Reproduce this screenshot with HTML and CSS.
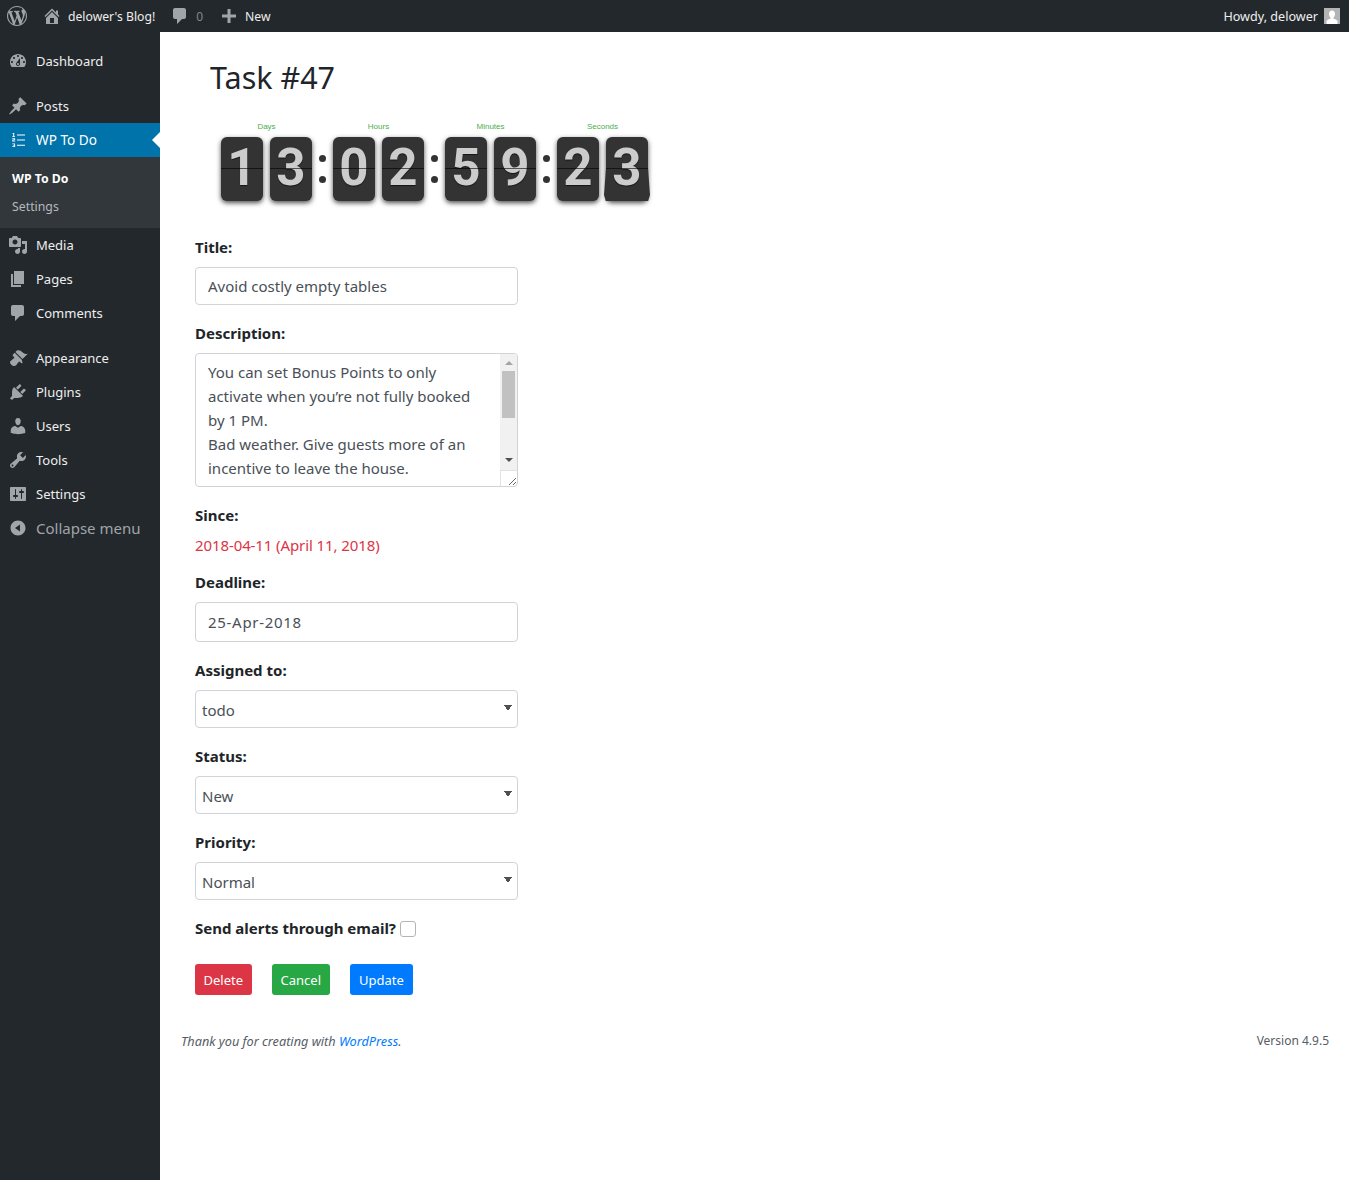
FILE: index.html
```html
<!DOCTYPE html>
<html lang="en">
<head>
  <meta charset="UTF-8" />
  <meta name="viewport" content="width=device-width, initial-scale=1.0" />
  <title>Task #47 - WP To Do</title>
  <link rel="stylesheet" href="styles.css">
</head>
<body>
  <!-- Admin bar -->
  <header class="adminbar">
    <svg class="bar-logo" viewBox="0 0 20 20"><path d="M20 10c0-5.51-4.49-10-10-10C4.48 0 0 4.49 0 10c0 5.52 4.48 10 10 10 5.51 0 10-4.48 10-10zM7.78 15.37L4.37 6.22c.55-.02 1.17-.08 1.17-.08.5-.06.44-1.13-.06-1.11 0 0-1.45.11-2.37.11-.18 0-.37 0-.58-.01C4.12 2.69 6.87 1.11 10 1.11c2.33 0 4.45.87 6.05 2.34-.68-.11-1.65.39-1.65 1.58 0 .74.45 1.36.9 2.1.35.61.55 1.36.55 2.46 0 1.49-1.4 5-1.4 5l-3.03-8.37c.54-.02.82-.17.82-.17.5-.05.44-1.25-.06-1.22 0 0-1.44.12-2.38.12-.87 0-2.33-.12-2.33-.12-.5-.03-.56 1.2-.06 1.22l.92.08 1.26 3.41zM17.41 10c.24-.64.74-1.87.43-4.25.7 1.29 1.05 2.71 1.05 4.25 0 3.29-1.73 6.24-4.4 7.78.97-2.59 1.94-5.2 2.92-7.78zM6.1 18.09C3.12 16.65 1.11 13.53 1.11 10c0-1.3.23-2.48.72-3.59C3.25 10.3 4.67 14.2 6.1 18.09zm4.03-6.63l2.58 6.98c-.86.29-1.76.45-2.71.45-.79 0-1.57-.11-2.29-.33.81-2.38 1.62-4.74 2.42-7.1z"/></svg>
    <div class="bar-item bar-home">
      <svg class="bar-icon" viewBox="0 0 20 20"><path d="M16 8.5l1.53 1.53-1.06 1.06L10 4.62l-6.47 6.47-1.06-1.06L10 2.5l4 4v-2h2v4zm-6-2.46l6 5.99V18H4v-5.97zM12 17v-5H8v5h4z"/></svg>
      <span class="bar-text">delower's Blog!</span>
    </div>
    <div class="bar-item bar-comments">
      <svg class="bar-icon" viewBox="0 0 20 20"><path d="M5 2h9c1.1 0 2 .9 2 2v7c0 1.1-.9 2-2 2h-2l-5 5v-5H5c-1.1 0-2-.9-2-2V4c0-1.1.9-2 2-2z"/></svg>
      <span class="bar-text bar-count">0</span>
    </div>
    <div class="bar-item bar-new">
      <svg class="bar-icon" viewBox="0 0 20 20"><path d="M17 8.5v3h-5.5V17h-3v-5.500H3v-3h5.500V3h3v5.500z"/></svg>
      <span class="bar-text">New</span>
    </div>
    <div class="bar-howdy">
      <span class="bar-text">Howdy, delower</span>
      <svg class="bar-avatar" viewBox="0 0 16 16"><rect width="16" height="16" fill="#b4b4b4"/><path fill="#fff" d="M8 2.500c1.900 0 3 1.500 3 3.400 0 1.500-.7 3-1.600 3.700v.9c1.500.5 3.600 1.300 4.100 2.500V16h-11v-3c.5-1.200 2.600-2 4.100-2.500v-.9C5.700 8.900 5 7.400 5 5.900c0-1.900 1.100-3.400 3-3.400z"/></svg>
    </div>
  </header>

  <div class="layout">
    <!-- Sidebar menu -->
    <nav class="sidebar">
      <a class="menu-item first">
        <svg class="menu-icon" viewBox="0 0 20 20"><path fill-rule="evenodd" d="M3.760 16h12.480c1.100-1.370 1.760-3.110 1.760-5 0-4.420-3.580-8-8-8s-8 3.580-8 8c0 1.890.66 3.630 1.760 5zM10 4c.55 0 1 .45 1 1s-.45 1-1 1-1-.45-1-1 .45-1 1-1zM6 6c.55 0 1 .45 1 1s-.45 1-1 1-1-.45-1-1 .45-1 1-1zm8 0c.55 0 1 .45 1 1s-.45 1-1 1-1-.45-1-1 .45-1 1-1zm-5.370 5.550L12 7v6c0 1.100-.9 2-2 2s-2-.9-2-2c0-.57.24-1.080.63-1.450zM4 10c.55 0 1 .45 1 1s-.45 1-1 1-1-.45-1-1 .45-1 1-1zm12 0c.55 0 1 .45 1 1s-.45 1-1 1-1-.45-1-1 .45-1 1-1zm-5 3c0-.55-.45-1-1-1s-1 .45-1 1 .45 1 1 1 1-.45 1-1z"/></svg>
        Dashboard
      </a>
      <a class="menu-item gap">
        <svg class="menu-icon" viewBox="0 0 20 20"><path d="M10.440 3.020l1.820-1.820 6.360 6.350-1.830 1.820c-1.050-.68-2.480-.57-3.410.36l-.75.75c-.92.93-1.040 2.350-.35 3.410l-1.830 1.820-2.410-2.410-2.800 2.790c-.42.42-3.380 2.710-3.800 2.290s1.860-3.390 2.280-3.810l2.790-2.790L4.100 9.360l1.830-1.820c1.050.69 2.480.57 3.400-.36l.75-.75c.93-.92 1.050-2.350.36-3.410z"/></svg>
        Posts
      </a>
      <a class="menu-item current">
        <svg class="menu-icon" viewBox="0 0 20 20"><path d="M9 4.600h8v1H9zM9 9.600h8v1H9zM9 14.800h8v1H9z"/><path d="M4.800 3h1.400v3.200H7v.8H4.300v-.8h.9V4H4.500zM4.300 8.200h2.800v2H5.300v.6h1.900v.8H4.300V9.600h1.900v-.6H4.300zM4.300 13.400h2.800v3.600H4.300v-.8h1.900v-.6H5v-.7h1.200v-.7H4.300z"/></svg>
        WP To Do
      </a>
      <div class="submenu">
        <a class="sub-item active">WP To Do</a>
        <a class="sub-item">Settings</a>
      </div>
      <a class="menu-item">
        <svg class="menu-icon" viewBox="0 0 20 20"><path d="M13 11V4c0-.55-.45-1-1-1h-1.670L9 1H5L3.670 3H2c-.55 0-1 .45-1 1v7c0 .55.45 1 1 1h10c.55 0 1-.45 1-1zM7 4.500c1.380 0 2.500 1.120 2.500 2.500S8.380 9.500 7 9.500 4.500 8.380 4.500 7 5.620 4.500 7 4.500zM14 6h5v10.500c0 1.380-1.120 2.500-2.500 2.500S14 17.880 14 16.500s1.120-2.500 2.500-2.500c.17 0 .34.02.5.05V9h-3V6zm-4 8.050V13h2v3.500c0 1.380-1.120 2.500-2.500 2.500S7 17.880 7 16.500 8.120 14 9.500 14c.17 0 .34.02.5.05z"/></svg>
        Media
      </a>
      <a class="menu-item">
        <svg class="menu-icon" viewBox="0 0 20 20"><path d="M6 15V2h10v13H6zm-1 1h8v2H3V5h2v11z"/></svg>
        Pages
      </a>
      <a class="menu-item">
        <svg class="menu-icon" viewBox="0 0 20 20"><path d="M5 2h9c1.100 0 2 .9 2 2v7c0 1.100-.9 2-2 2h-2l-5 5v-5H5c-1.100 0-2-.9-2-2V4c0-1.100.9-2 2-2z"/></svg>
        Comments
      </a>
      <a class="menu-item gap">
        <svg class="menu-icon" viewBox="0 0 20 20"><path d="M14.480 11.060L7.410 3.990l1.500-1.500c.5-.56 2.300-.47 3.510.32 1.210.8 1.430 1.280 2.910 2.100 1.180.64 2.450 1.260 4.450.85zm-.71.71L6.700 4.700 4.930 6.470c-.39.39-.39 1.020 0 1.410l1.060 1.060c.39.39.39 1.030 0 1.420-.6.6-1.430 1.110-2.210 1.690-.35.26-.7.53-1.010.84C1.430 13.230 2 15.300 3.330 16.670c1.340 1.340 3.430 1.910 4.780.57.31-.31.58-.66.84-1.010.58-.78 1.090-1.610 1.690-2.210.39-.39 1.030-.39 1.420 0l1.060 1.060c.39.39 1.020.39 1.410 0z"/></svg>
        Appearance
      </a>
      <a class="menu-item">
        <svg class="menu-icon" viewBox="0 0 20 20"><path d="M13.110 4.360L9.870 7.600 8 5.730l3.240-3.240c.35-.34 1.050-.2 1.560.32.52.51.66 1.210.31 1.550zm-8 1.770l.91-1.120 9.010 9.010-1.190.84c-.71.71-2.630 1.160-3.820 1.160H6.140L4.900 17.260c-.59.59-1.540.59-2.120 0-.59-.58-.59-1.530 0-2.120l1.240-1.240v-3.880c0-1.130.4-3.190 1.090-3.890zm7.260 3.970l3.240-3.240c.34-.35 1.040-.21 1.550.31.52.51.66 1.210.31 1.550l-3.240 3.250z"/></svg>
        Plugins
      </a>
      <a class="menu-item">
        <svg class="menu-icon" viewBox="0 0 20 20"><path d="M10 9.250c-2.270 0-2.730-3.440-2.730-3.440C7 4.020 7.820 2 9.970 2c2.160 0 2.980 2.020 2.710 3.810 0 0-.41 3.440-2.680 3.440zm0 2.570L12.720 10c2.390 0 4.520 2.330 4.520 4.530v2.490s-3.650 1.130-7.240 1.130c-3.650 0-7.240-1.130-7.240-1.130v-2.490c0-2.250 1.940-4.480 4.470-4.480z"/></svg>
        Users
      </a>
      <a class="menu-item">
        <svg class="menu-icon" viewBox="0 0 20 20"><path d="M16.680 9.770c-1.340 1.340-3.300 1.670-4.950.99l-5.410 6.520c-.99.99-2.590.99-3.580 0s-.99-2.590 0-3.570l6.520-5.420c-.68-1.650-.35-3.610.99-4.950 1.280-1.280 3.120-1.620 4.720-1.060l-2.890 2.890 2.820 2.820 2.860-2.870c.53 1.580.18 3.390-1.080 4.650zM3.810 16.210c.4.39 1.040.39 1.430 0 .4-.4.4-1.040 0-1.430-.39-.4-1.030-.4-1.430 0-.39.39-.39 1.030 0 1.430z"/></svg>
        Tools
      </a>
      <a class="menu-item">
        <svg class="menu-icon" viewBox="0 0 20 20"><path d="M18 16V4c0-.55-.45-1-1-1H3c-.55 0-1 .45-1 1v12c0 .55.45 1 1 1h14c.55 0 1-.45 1-1zM8 11h1c.55 0 1 .45 1 1s-.45 1-1 1H8v1.500c0 .28-.22.5-.5.5s-.5-.22-.5-.5V13H6c-.55 0-1-.45-1-1s.45-1 1-1h1V5.500c0-.28.22-.5.5-.5s.5.22.5.5V11zm5-2h-1c-.55 0-1-.45-1-1s.45-1 1-1h1V5.500c0-.28.22-.5.5-.5s.5.22.5.5V7h1c.55 0 1 .45 1 1s-.45 1-1 1h-1v5.500c0 .28-.22.5-.5.5s-.5-.22-.5-.5V9z"/></svg>
        Settings
      </a>
      <a class="menu-item collapse">
        <svg class="menu-icon" viewBox="0 0 20 20"><path fill-rule="evenodd" d="M10 2.500c-4.140 0-7.500 3.360-7.500 7.500s3.360 7.500 7.500 7.500 7.500-3.360 7.500-7.500-3.360-7.500-7.500-7.500zM12 6.500v7L7 10z"/></svg>
        Collapse menu
      </a>
    </nav>

    <!-- Page content -->
    <main class="main">
      <div class="content">
        <h2 class="task-title">Task #47</h2>

        <div class="countdown">
          <div class="cd-unit">
            <div class="cd-label">Days</div>
            <div class="cd-digits"><span class="digit">1</span><span class="digit">3</span></div>
          </div>
          <div class="cd-sep"><i></i><i></i></div>
          <div class="cd-unit">
            <div class="cd-label">Hours</div>
            <div class="cd-digits"><span class="digit">0</span><span class="digit">2</span></div>
          </div>
          <div class="cd-sep"><i></i><i></i></div>
          <div class="cd-unit">
            <div class="cd-label">Minutes</div>
            <div class="cd-digits"><span class="digit">5</span><span class="digit">9</span></div>
          </div>
          <div class="cd-sep"><i></i><i></i></div>
          <div class="cd-unit">
            <div class="cd-label">Seconds</div>
            <div class="cd-digits"><span class="digit">2</span><span class="digit flap">3</span></div>
          </div>
        </div>

        <form class="task-form">
          <div class="form-group">
            <label for="title">Title:</label>
            <input type="text" id="title" class="form-control" value="Avoid costly empty tables">
          </div>
          <div class="form-group">
            <label for="description">Description:</label>
            <div class="area-wrap">
              <textarea id="description" class="form-control form-area">You can set Bonus Points to only
activate when you’re not fully booked
by 1 PM.
Bad weather. Give guests more of an
incentive to leave the house.</textarea>
              <!-- Scrollbar drawn over the textarea -->
              <div class="area-scroll">
                <span class="arrow-up"></span>
                <span class="thumb"></span>
                <span class="arrow-down"></span>
              </div>
              <div class="area-corner"></div>
            </div>
          </div>
          <div class="form-group since">
            <label>Since:</label>
            <div class="since-date">2018-04-11 (April 11, 2018)</div>
          </div>
          <div class="form-group">
            <label for="deadline">Deadline:</label>
            <input type="text" id="deadline" class="form-control tall" value="25-Apr-2018">
          </div>
          <div class="form-group">
            <label for="assigned">Assigned to:</label>
            <select id="assigned" class="form-select"><option>todo</option></select>
          </div>
          <div class="form-group">
            <label for="status">Status:</label>
            <select id="status" class="form-select"><option>New</option></select>
          </div>
          <div class="form-group">
            <label for="priority">Priority:</label>
            <select id="priority" class="form-select"><option>Normal</option></select>
          </div>
          <div class="form-check">
            <label for="alerts">Send alerts through email?</label>
            <input type="checkbox" id="alerts">
          </div>
          <div class="actions">
            <button type="button" class="btn btn-delete">Delete</button>
            <button type="button" class="btn btn-cancel">Cancel</button>
            <button type="button" class="btn btn-update">Update</button>
          </div>
        </form>
      </div>

      <footer class="footer">
        <em>Thank you for creating with <a href="#">WordPress</a>.</em>
        <span>Version 4.9.5</span>
      </footer>
    </main>
  </div>
</body>
</html>
```

FILE: styles.css
```css
/* Basic page setup */
* {
  box-sizing: border-box;
}
body {
  margin: 0;
  background: #fff;
  color: #212529;
  font-family: "Noto Sans", "Open Sans", sans-serif;
  font-size: 15px;
  line-height: 24px;
}

/* Admin bar */
.adminbar {
  height: 32px;
  background: #23282d;
  color: #eee;
  display: flex;
  align-items: center;
  font-size: 12.2px;
  padding: 0 9px 0 7px;
}
.adminbar svg {
  fill: #a0a5aa;
  flex: none;
}
.bar-text {
  padding-top: 1px;
}
.bar-logo {
  width: 20px;
  height: 20px;
  margin-right: 15px;
}
.bar-item {
  display: flex;
  align-items: center;
}
.bar-icon {
  width: 20px;
  height: 20px;
  margin-right: 6px;
}
.bar-home {
  margin-right: 15px;
}
.bar-comments {
  margin-right: 16px;
}
.bar-count {
  color: #82878c;
  font-size: 12px;
}
.bar-howdy {
  margin-left: auto;
  display: flex;
  align-items: center;
  gap: 6px;
  font-size: 12.6px;
}
.bar-avatar {
  width: 16px;
  height: 16px;
}

/* Sidebar */
.layout {
  display: flex;
  min-height: 1148px;
}
.sidebar {
  width: 160px;
  flex: none;
  background: #23282d;
  font-size: 13px;
  color: #eee;
}
.menu-item {
  height: 34px;
  display: flex;
  align-items: center;
  gap: 8px;
  padding-left: 8px;
  position: relative;
}
.menu-item.first {
  margin-top: 12px;
}
.menu-item.gap {
  margin-top: 11px;
}
.menu-icon {
  width: 20px;
  height: 20px;
  fill: #a0a5aa;
  flex: none;
}
.menu-item.current {
  background: #0073aa;
  color: #fff;
  font-size: 13.6px;
}
.menu-item.current .menu-icon {
  fill: #fff;
}
.menu-item.current::after {
  content: "";
  position: absolute;
  right: 0;
  top: 9px;
  border: 8px solid transparent;
  border-right-color: #fff;
  border-left-width: 0;
}
.submenu {
  background: #32373c;
  height: 71px;
  padding-top: 8px;
}
.sub-item {
  display: block;
  height: 28px;
  line-height: 28px;
  padding-left: 12px;
  font-size: 12.3px;
  color: #b4b9be;
}
.sub-item.active {
  color: #fff;
  font-weight: 700;
}
.collapse {
  color: #a0a5aa;
  font-size: 15px;
}

/* Main column */
.main {
  flex: 1;
  display: flex;
  flex-direction: column;
}
.content {
  padding: 0 35px;
}
.task-title {
  margin: 23px 0 0 15px;
  font-size: 30.5px;
  font-weight: 400;
  line-height: 44px;
}

/* Countdown */
.countdown {
  display: flex;
  margin: 20px 0 34px 26px;
}
.cd-unit {
  width: 91px;
}
.cd-label {
  height: 18px;
  color: #4cae4c;
  font-family: "Liberation Sans", sans-serif;
  font-size: 8px;
  line-height: 16px;
  text-align: center;
}
.cd-digits {
  display: flex;
  gap: 7px;
}
.digit {
  width: 42px;
  height: 64px;
  background: #333;
  border-radius: 6px;
  box-shadow: 0 2px 5px rgba(0,0,0,0.7);
  color: #ccc;
  font-family: Roboto, "Liberation Sans", sans-serif;
  font-size: 51px;
  font-weight: 700;
  line-height: 62px;
  text-align: center;
  text-shadow: 0 1px 1px rgba(0,0,0,0.6);
  position: relative;
  z-index: 0;
}
.digit::after {
  content: "";
  position: absolute;
  left: 0;
  right: 0;
  top: 31px;
  height: 1px;
  background: rgba(0,0,0,0.6);
}
.digit.flap::before {
  content: "";
  position: absolute;
  left: -2px;
  right: -2px;
  top: 31px;
  bottom: 0;
  background: #333;
  z-index: -1;
  clip-path: polygon(2px 0, calc(100% - 2px) 0, 100% 82%, 96% 100%, 4% 100%, 0 82%);
}
.cd-sep {
  width: 21px;
  display: flex;
  flex-direction: column;
  align-items: center;
  gap: 14px;
  padding-top: 36px;
}
.cd-sep i {
  width: 7px;
  height: 7px;
  border-radius: 50%;
  background: #333;
}

/* Form */
.task-form {
  width: 323px;
}
.form-group {
  margin-bottom: 16px;
}
label {
  display: block;
  font-weight: 700;
  margin-bottom: 8px;
  color: #212529;
}
.form-control {
  display: block;
  width: 100%;
  height: 38px;
  padding: 6px 12px;
  border: 1px solid #ced4da;
  border-radius: 4px;
  background: #fff;
  color: #495057;
  font: inherit;
  font-size: 15px;
  line-height: 24px;
}
.form-control.tall {
  height: 40px;
  letter-spacing: 0.7px;
}
.area-wrap {
  position: relative;
}
.form-area {
  height: 134px;
  overflow: hidden;
  resize: both;
  white-space: pre;
}
.area-scroll {
  position: absolute;
  top: 1px;
  right: 1px;
  bottom: 17px;
  width: 17px;
  background: #f1f1f1;
  border-radius: 0 3px 0 0;
}
.arrow-up,
.arrow-down {
  position: absolute;
  left: 5px;
  border: 4px solid transparent;
  border-top-width: 0;
  border-bottom-width: 0;
}
.arrow-up {
  top: 7px;
  border-bottom: 4px solid #a3a3a3;
}
.arrow-down {
  top: 104px;
  border-top: 4px solid #505050;
}
.thumb {
  position: absolute;
  top: 17px;
  left: 2px;
  width: 13px;
  height: 47px;
  background: #c1c1c1;
}
.area-corner {
  position: absolute;
  right: 1px;
  bottom: 1px;
  width: 17px;
  height: 16px;
  border-left: 1px solid #e3e3e3;
  border-top: 1px solid #e3e3e3;
}
.since {
  margin-bottom: 13px;
}
.since label {
  margin-bottom: 6px;
}
.since-date {
  color: #dc3545;
  letter-spacing: -0.1px;
}
.form-select {
  display: block;
  width: 100%;
  height: 38px;
  padding: 2px 6px 0;
  border: 1px solid #ced4da;
  border-radius: 4px;
  background-color: #fff;
  background-image: linear-gradient(to top right, transparent 50%, #505050 50%), linear-gradient(to top left, transparent 50%, #505050 50%);
  background-position: 308px 14px, 312px 14px;
  background-size: 4px 6px;
  background-repeat: no-repeat;
  color: #495057;
  font: inherit;
  font-size: 15px;
  appearance: none;
}
.form-check {
  display: flex;
  align-items: center;
  gap: 4px;
  margin-bottom: 24px;
}
.form-check label {
  margin: 0;
}
.form-check input {
  appearance: none;
  width: 16px;
  height: 16px;
  margin: 2px 0 0;
  background: #fff;
  border: 1px solid #b5b5b5;
  border-radius: 3px;
}

/* Buttons */
.actions {
  display: flex;
  gap: 20px;
}
.btn {
  height: 31px;
  padding: 0 9px;
  border: none;
  border-radius: 3px;
  color: #fff;
  font: inherit;
  font-size: 13px;
}
.btn-delete {
  background: #dc3545;
  padding: 0 8.5px;
}
.btn-cancel {
  background: #28a745;
}
.btn-update {
  background: #007bff;
}

/* Footer */
.footer {
  display: flex;
  justify-content: space-between;
  margin-top: 34px;
  padding: 0 20px 0 21px;
  font-size: 12px;
  color: #555d66;
}
.footer em {
  font-size: 12.7px;
}
.footer a {
  color: #007bff;
  text-decoration: none;
}
```
